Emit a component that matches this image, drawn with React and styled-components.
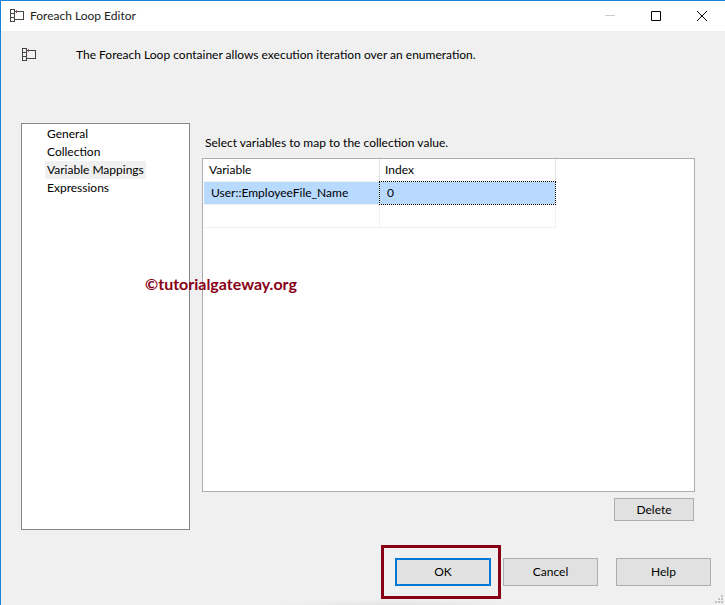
import { useState } from "react";
import styled, { createGlobalStyle } from "styled-components";

const pages = ["General", "Collection", "Variable Mappings", "Expressions"];

const mappings = [
  { id: 1, variable: "User::EmployeeFile_Name", index: "0" },
  { id: 2, variable: "", index: "" },
];

function LoopIcon() {
  return (
    <svg
      width="14"
      height="13"
      viewBox="0 0 14 13"
      fill="none"
      stroke="#444"
      shapeRendering="crispEdges"
      aria-hidden="true"
    >
      <path d="M0.5 0.5h4v12h-4zM0.5 4.5h4M0.5 8.5h4M4.5 2.5h9v8h-9" />
      <path d="M6.5 1v3" stroke="#8a5a66" />
    </svg>
  );
}

export default function App() {
  const [page, setPage] = useState("Variable Mappings");
  const [selected, setSelected] = useState(1);

  return (
    <Window>
      <GlobalStyle />
      <TitleBar>
        <LoopIcon />
        <h1>Foreach Loop Editor</h1>
        <CaptionButton disabled aria-label="Minimize">
          <svg width="10" height="10" stroke="#ccc" shapeRendering="crispEdges">
            <path d="M0 4.5h10" />
          </svg>
        </CaptionButton>
        <CaptionButton aria-label="Maximize">
          <svg width="10" height="10" fill="none" stroke="#000">
            <path d="M0.5 0.5h9v9h-9z" />
          </svg>
        </CaptionButton>
        <CaptionButton aria-label="Close">
          <svg width="10" height="10" stroke="#000">
            <path d="M0 0l10 10M10 0l-10 10" />
          </svg>
        </CaptionButton>
      </TitleBar>
      <Intro>
        <LoopIcon />
        <p>
          The Foreach Loop container allows execution iteration over an
          enumeration.
        </p>
      </Intro>
      <Main>
        <PageList>
          {pages.map((name) => (
            <li key={name}>
              <PageButton $active={name === page} onClick={() => setPage(name)}>
                {name}
              </PageButton>
            </li>
          ))}
        </PageList>
        <Panel>
          <PanelLabel id="mappings-label">
            Select variables to map to the collection value.
          </PanelLabel>
          <GridBox>
            <Grid aria-labelledby="mappings-label">
              <thead>
                <tr>
                  <HeadCell>Variable</HeadCell>
                  <HeadCell>Index</HeadCell>
                </tr>
              </thead>
              <tbody>
                {mappings.map((row) => (
                  <Row
                    key={row.id}
                    $selected={row.id === selected}
                    onClick={() => setSelected(row.id)}
                  >
                    <Cell>{row.variable}</Cell>
                    <Cell $focused={row.id === selected}>{row.index}</Cell>
                  </Row>
                ))}
              </tbody>
            </Grid>
          </GridBox>
          <PanelActions>
            <SmallButton>Delete</SmallButton>
          </PanelActions>
        </Panel>
        <Watermark>©tutorialgateway.org</Watermark>
      </Main>
      <Footer>
        <Highlight>
          <DefaultButton>OK</DefaultButton>
        </Highlight>
        <Button>Cancel</Button>
        <HelpButton>Help</HelpButton>
      </Footer>
      <SizeGrip width="8" height="8" fill="#bfbfbf" aria-hidden="true">
        <path d="M6 0h2v2h-2zM3 3h2v2h-2zM6 3h2v2h-2zM0 6h2v2h-2zM3 6h2v2h-2zM6 6h2v2h-2z" />
      </SizeGrip>
    </Window>
  );
}

const GlobalStyle = createGlobalStyle`
  * {
    box-sizing: border-box;
  }

  body {
    margin: 0;
  }

  body, button {
    font-family: Lato, "Open Sans", sans-serif;
    font-size: 12px;
    line-height: 18px;
    color: #000;
  }

  h1, p, ul {
    margin: 0;
    padding: 0;
    font-size: 12px;
    font-weight: normal;
  }
`;

const Window = styled.div`
  position: relative;
  display: flex;
  flex-direction: column;
  min-height: 100vh;
  background: #f0f0f0;
  border-top: 1px solid #1883d7;
  border-left: 1px solid #1883d7;
`;

const TitleBar = styled.header`
  display: flex;
  align-items: center;
  height: 30px;
  padding-left: 9px;
  background: #fff;

  > svg {
    margin-bottom: 2px;
  }

  h1 {
    flex: 1;
    margin-left: 6px;
    color: #222;
  }
`;

const CaptionButton = styled.button`
  display: flex;
  justify-content: center;
  align-items: center;
  width: 46px;
  height: 28px;
  padding: 0;
  background: none;
  border: none;
`;

const Intro = styled.section`
  display: flex;
  align-items: flex-start;
  gap: 40px;
  height: 92px;
  padding: 15px 21px;

  svg {
    margin-top: 2px;
  }
`;

const Main = styled.main`
  position: relative;
  display: flex;
  flex: 1;
  gap: 12px;
  padding: 0 30px 0 20px;
`;

const PageList = styled.ul`
  width: 169px;
  padding: 1px 0 0 23px;
  list-style: none;
  background: #fff;
  border: 1px solid #828790;
`;

const PageButton = styled.button`
  display: block;
  padding: 0 2px;
  border: none;
  background: ${(props) => (props.$active ? "#f0f0f0" : "none")};
`;

const Panel = styled.section`
  display: flex;
  flex: 1;
  flex-direction: column;
  padding: 11px 0 9px;
`;

const PanelLabel = styled.p`
  && {
    padding: 0 3px;
    margin-bottom: 6px;
  }
`;

const GridBox = styled.div`
  flex: 1;
  padding-left: 1px;
  background: #fff;
  border: 1px solid #abadb3;
`;

const Grid = styled.table`
  width: 352px;
  table-layout: fixed;
  border-spacing: 0;
`;

const HeadCell = styled.th`
  height: 23px;
  padding: 0 5px;
  font-weight: normal;
  text-align: left;
  border-right: 1px solid #e5e5e5;
  border-bottom: 1px solid #f0f0f0;
`;

const Row = styled.tr`
  background: ${(props) => (props.$selected ? "#b8daff" : "none")};
`;

const Cell = styled.td`
  position: relative;
  height: 23px;
  padding: 0 7px;
  border-right: 1px solid #f0f0f0;
  border-bottom: 1px solid #f0f0f0;

  &::after {
    content: "";
    display: ${(props) => (props.$focused ? "block" : "none")};
    position: absolute;
    inset: -1px;
    border: 1px dotted #000;
  }
`;

const PanelActions = styled.div`
  display: flex;
  justify-content: flex-end;
  padding: 6px 1px 0 0;
`;

const Button = styled.button`
  width: 95px;
  height: 28px;
  padding: 0;
  background: #e1e1e1;
  border: 1px solid #adadad;
`;

const SmallButton = styled(Button)`
  width: 80px;
  height: 23px;
`;

const DefaultButton = styled(Button)`
  width: 96px;
  border: 2px solid #0078d7;
`;

const HelpButton = styled(Button)`
  margin-left: 16px;
`;

const Footer = styled.footer`
  display: flex;
  justify-content: flex-end;
  align-items: flex-start;
  gap: 2px;
  height: 75px;
  padding: 15px 14px 0 0;
  background: radial-gradient(ellipse 120px 6px at 55% 100%, #e4e4e4, #f0f0f0);

  > button {
    margin-top: 13px;
  }
`;

const Highlight = styled.div`
  padding: 10px 7px 10px 11px;
  border: 3px solid #880015;
`;

const Watermark = styled.span`
  position: absolute;
  top: 152px;
  left: 144px;
  font-family: Lato, sans-serif;
  font-size: 16px;
  font-weight: bold;
  color: #880015;
`;

const SizeGrip = styled.svg`
  position: absolute;
  right: 2px;
  bottom: 2px;
`;
